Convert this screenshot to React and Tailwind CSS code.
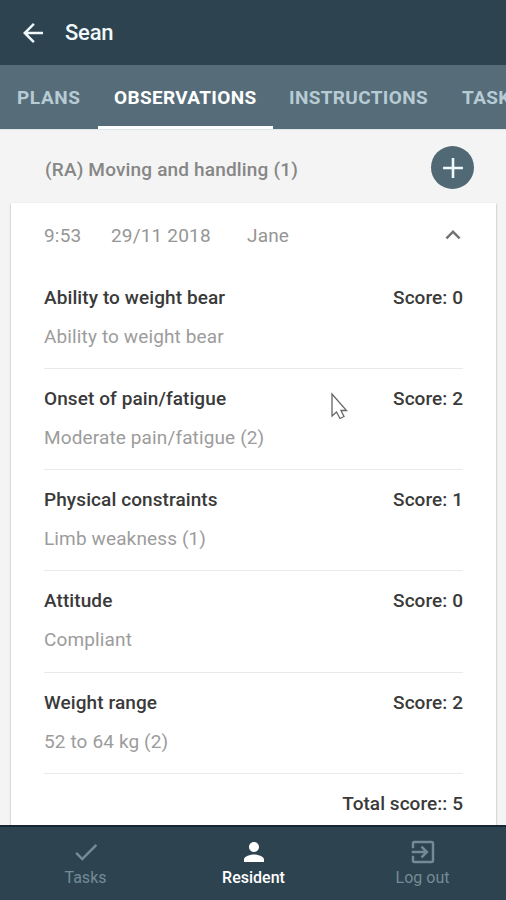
const rows = [
  ["Ability to weight bear", "Ability to weight bear", 0],
  ["Onset of pain/fatigue", "Moderate pain/fatigue (2)", 2],
  ["Physical constraints", "Limb weakness (1)", 1],
  ["Attitude", "Compliant", 0],
  ["Weight range", "52 to 64 kg (2)", 2],
];

function Icon({ d, className }) {
  return (
    <svg viewBox="0 0 24 24" fill="currentColor" className={className}>
      <path d={d} />
    </svg>
  );
}

const BACK = "M20 11H7.83l5.59-5.59L12 4l-8 8 8 8 1.41-1.41L7.83 13H20v-2z";
const PLUS = "M19 12.9h-6.1v6.1h-1.8v-6.1H5v-1.8h6.1V5h1.8v6.1H19z";
const UP = "M7.41 15.41L12 10.83l4.59 4.58L18 14l-6-6-6 6z";
const CHECK = "M9 16.17L4.83 12l-1.42 1.41L9 19 21 7l-1.41-1.41z";
const PERSON = "M12 12c2.21 0 4-1.79 4-4s-1.79-4-4-4-4 1.79-4 4 1.79 4 4 4zm0 2c-2.67 0-8 1.34-8 4v2h16v-2c0-2.66-5.33-4-8-4z";
const EXIT =
  "M10.09 15.59L11.5 17l5-5-5-5-1.41 1.41L12.67 11H3v2h9.67l-2.58 2.59zM19 3H5c-1.11 0-2 .9-2 2v4h2V5h14v14H5v-4H3v4c0 1.1.89 2 2 2h14c1.1 0 2-.9 2-2V5c0-1.1-.9-2-2-2z";

export default function App() {
  return (
    <div className="relative flex h-[900px] w-[506px] flex-col overflow-hidden bg-[#f4f4f4] font-['Roboto','Liberation_Sans',sans-serif] text-[19px]">
      <header className="flex h-[65px] shrink-0 items-center bg-[#2d434f] pl-[18px] text-[#f0f8fa]">
        <Icon d={BACK} className="size-[30px]" />
        <h1 className="ml-[17px] text-[22px] font-medium leading-none tracking-[-0.2px]">Sean</h1>
      </header>

      <nav className="flex h-[64px] shrink-0 items-stretch bg-[#566d79] text-[19px] font-bold leading-[66px] whitespace-nowrap text-[#b7cbd4]">
        <span className="w-[98px] shrink-0 pl-[17px] tracking-[0.6px]">PLANS</span>
        <span className="w-[175px] shrink-0 border-b-[3px] border-white pl-[16px] tracking-[0.33px] text-white">OBSERVATIONS</span>
        <span className="w-[173px] shrink-0 pl-[16px] tracking-[0.35px]">INSTRUCTIONS</span>
        <span className="shrink-0 pl-[16px] tracking-[0.35px]">TASKS</span>
      </nav>

      <div className="flex h-[74px] shrink-0 items-start justify-between border-t border-[#dfe6ea] pr-[32px] pl-[45px]">
        <h2 className="mt-[28px] leading-[24px] font-medium tracking-[0.17px] text-[#868686]">(RA) Moving and handling (1)</h2>
        <button className="mt-[16px] flex size-[43px] items-center justify-center rounded-full bg-[#516974] text-[#f0fafa]">
          <Icon d={PLUS} className="size-[34px]" />
        </button>
      </div>

      <main className="mr-[10px] ml-[11px] min-h-0 flex-1 bg-white px-[33px] shadow-[0_1px_2px_0_rgba(0,0,0,0.35)]">
        <div className="flex h-[64.8px] items-center leading-none tracking-[0.18px] text-[#969696]">
          <span className="w-[67px]">9:53</span>
          <span className="w-[136px]">29/11 2018</span>
          <span>Jane</span>
          <Icon d={UP} className="mr-[-5px] ml-auto size-[30px] text-[#737373]" />
        </div>
        {rows.map(([title, value, score], i) => (
          <section key={i} className="h-[101.2px] border-b border-[#e9e9e9] pt-[18px]">
            <div className="flex justify-between leading-[24px] font-medium text-[#3a3a3a]">
              <span className="tracking-[0.09px]">{title}</span>
              <span className="tracking-[0.06px]">Score: {score}</span>
            </div>
            <p className="mt-[15px] leading-[24px] tracking-[0.13px] text-[#9c9c9c]">{value}</p>
          </section>
        ))}
        <p className="pt-[18px] text-right leading-[24px] font-medium tracking-[0.05px] text-[#3a3a3a]">Total score:: 5</p>
      </main>

      <footer className="relative flex h-[75px] shrink-0 border-t-2 border-[#142732] bg-[#2d434f] text-[16px] text-[#748b97]">
        <div className="flex flex-1 flex-col items-center pt-[10px] pl-[2px]">
          <Icon d={CHECK} className="size-[30px]" />
          <span className="mt-[-1px] leading-[24px]">Tasks</span>
        </div>
        <div className="flex flex-1 flex-col items-center pt-[10px] pl-[1px] font-medium text-white">
          <Icon d={PERSON} className="size-[30px]" />
          <span className="mt-[-1px] leading-[24px]">Resident</span>
        </div>
        <div className="flex flex-1 flex-col items-center pt-[10px] pl-[2px]">
          <Icon d={EXIT} className="size-[30px]" />
          <span className="mt-[-1px] leading-[24px]">Log out</span>
        </div>
      </footer>

      <svg viewBox="0 0 18 28" className="absolute top-[392px] left-[330px] h-[28px] w-[18px]" fill="#fff" stroke="#666" strokeWidth="1.3">
        <path d="M2 2v22l4.5-4 3.5 6.5 4-2-3-6h5.5z" />
      </svg>
    </div>
  );
}
